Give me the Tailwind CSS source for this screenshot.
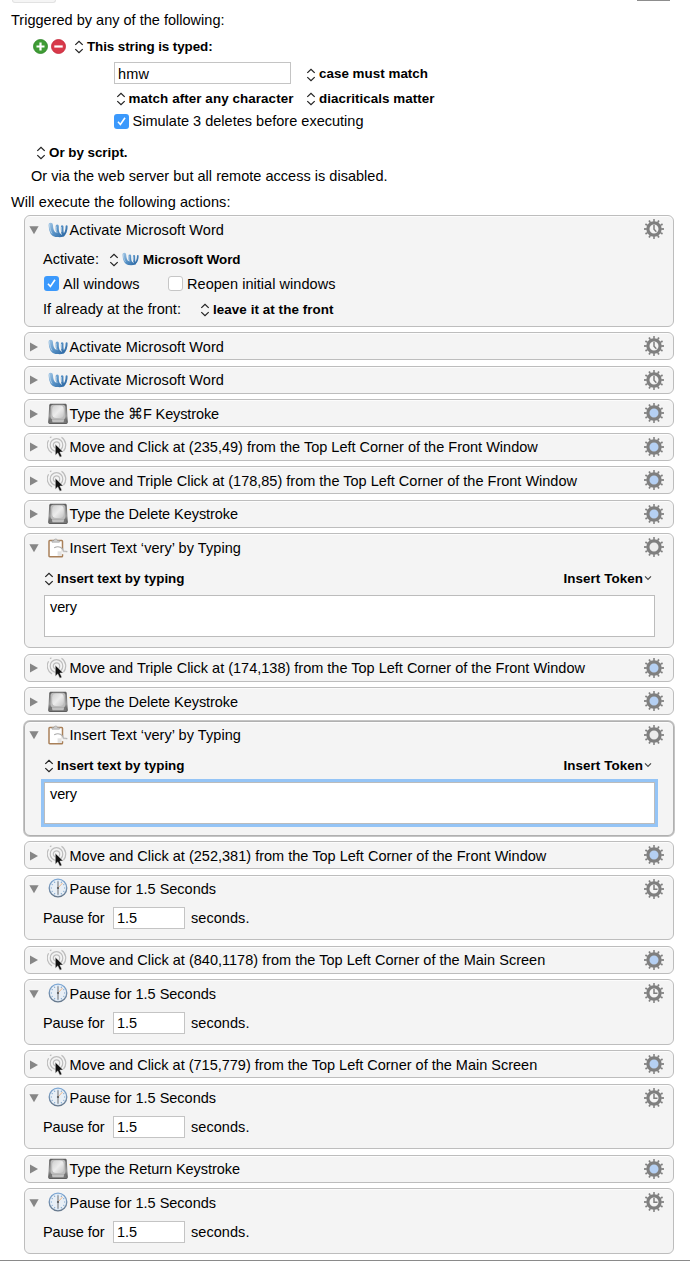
<!DOCTYPE html>
<html lang="en">
<head>
<meta charset="utf-8">
<title>Macro editor</title>
<script src="https://cdn.jsdelivr.net/npm/@tailwindcss/browser@4"></script>
</head>
<body class="bg-white">
<svg class="absolute size-0" width="0" height="0">
  <defs>
    <linearGradient id="gWord" gradientUnits="userSpaceOnUse" x1="1" y1="1" x2="15" y2="15"><stop offset="0" stop-color="#a3c6e4"/><stop offset=".5" stop-color="#5a94c8"/><stop offset="1" stop-color="#2f6ba6"/></linearGradient>
    <linearGradient id="gKey" x1="0" y1="0" x2="0" y2="1"><stop offset="0" stop-color="#5c5c5c"/><stop offset=".6" stop-color="#999"/><stop offset="1" stop-color="#3f3f3f"/></linearGradient>
    <linearGradient id="gCap" x1="0" y1="0" x2="1" y2="1"><stop offset="0" stop-color="#cfcfcf"/><stop offset=".5" stop-color="#ececec"/><stop offset="1" stop-color="#c4c4c4"/></linearGradient>
    <linearGradient id="gRim" x1="0" y1="0" x2="0" y2="1"><stop offset="0" stop-color="#7fa9d6"/><stop offset="1" stop-color="#66788c"/></linearGradient>
  </defs>
  <symbol id="updown" viewBox="0 0 10 14"><path d="M1.300 4.900 5 1.300l3.700 3.600M1.300 9.100 5 12.700l3.700-3.600" fill="none" stroke="#222" stroke-width="1.25"/></symbol>
  <symbol id="down" viewBox="0 0 8 6"><path d="M1 1.300 4 4.300l3-3" fill="none" stroke="#444" stroke-width="1.200"/></symbol>
  <symbol id="open" viewBox="0 0 10 10"><path d="M.4 1.300h9.200L5 9.200z" fill="#868686"/></symbol>
  <symbol id="closed" viewBox="0 0 10 10"><path d="M1 .5v9L9 5z" fill="#868686"/></symbol>
  <symbol id="word" viewBox="0 0 20 16">
    <g fill="none" stroke="url(#gWord)" stroke-linecap="round">
      <path d="M2.700 2.900C2.900 7.500 4.500 12.400 8 12.900" stroke-width="4.400"/>
      <path d="M9.200 4.200c-.2 4 .2 8 2.800 9" stroke-width="3.200"/>
      <path d="M14.200 4.600c-.2 3.500 0 6.500 1 8" stroke-width="2.600"/>
      <path d="M18.600 4.200c.1 3.500-1.300 8.500-3.600 9" stroke-width="2"/>
      <path d="M6 12.500c2 2.200 7 1.800 9.500 1" stroke-width="2"/>
    </g>
    <path d="M1.500 2.400c.2 3.800 1 6.600 2.600 9.100M8.300 4.500c-.1 3 .2 5 .9 6.600M13.500 5l.2 5" fill="none" stroke="#cbe1f3" stroke-width=".8" opacity=".8"/>
  </symbol>
  <symbol id="key" viewBox="0 0 20 22">
    <path d="M3 .8h14c1.300 0 1.700.7 1.800 1.600l1 16.700c0 1.300-.8 2-2 2H2.200c-1.300 0-2-.7-2-2l1-16.700C1.300 1.400 1.800.8 3 .8z" fill="url(#gKey)"/>
    <path d="M2 16.500h16l.8 2.700c.1.800-.3 1.200-1 1.200H2.200c-.7 0-1.100-.4-1-1.200z" fill="#777"/>
    <path d="M3.800 16.300h12.500l-.8 3h-11z" fill="#c2c2c2"/>
    <rect x="2.600" y="1.800" width="14.800" height="14.500" rx="2.500" fill="#bcbcbc"/>
    <rect x="4.200" y="2.600" width="11.600" height="12.300" rx="4" fill="url(#gCap)"/>
  </symbol>
  <symbol id="click" viewBox="0 0 20 22">
    <g fill="none" stroke="#bdbdbd" stroke-width="1.200"><circle cx="9.500" cy="9" r="3.200"/><circle cx="9.500" cy="9" r="6.300"/><path d="M1.600 4.200A9.300 9.300 0 0 0 5 17M14.500 1.200A9.300 9.300 0 0 1 16.500 15M3 1.800l1.400-1"/></g>
    <path d="M8.300 8.200v11l2.500-2.300 2 4.300 2.100-1-2-4.200h3.400z" fill="#111" stroke="#eee" stroke-width=".5"/>
  </symbol>
  <symbol id="clip" viewBox="0 0 20 20">
    <rect x="1" y="2.600" width="13.500" height="16.200" rx=".8" fill="#fff" stroke="#a98059" stroke-width="1.500"/>
    <path d="M4 4.200V2.500h2C6 .5 9.400.5 9.400 2.500h2v1.700z" fill="#cfcfcf" stroke="#999" stroke-width=".6"/>
    <path d="M9.600 17.800v-4.500h4v4.500z" fill="#e2e2e2"/>
    <path d="M13.500 11.200h2.500v5h-2.500z" fill="#f4f4f4"/>
    <path d="M6.200 9.800c5-2.600 8.300.2 9.300 3.200l3.800.6" fill="none" stroke="#a9a9a9" stroke-width="1.100"/>
    <path d="M15.200 10.500v3.200h3.600" fill="none" stroke="#c4c4c4" stroke-width=".9"/>
  </symbol>
  <symbol id="clock" viewBox="0 0 20 20">
    <circle cx="10" cy="10" r="8.800" fill="#e8eff6" stroke="url(#gRim)" stroke-width="1.300"/>
    <circle cx="10" cy="10" r="6.700" fill="none" stroke="#6f9cc8" stroke-width="1.100" pathLength="120" stroke-dasharray="3 7" stroke-dashoffset="1.500"/>
    <path d="m10 10 4.500-5" stroke="#efb98c" stroke-width="1"/>
    <path d="M10 3.500v13" stroke="#96999d" stroke-width="1.500"/><circle cx="10" cy="10" r="1.100" fill="#555"/>
  </symbol>
  <symbol id="gear" viewBox="0 0 20 20">
    <circle cx="10" cy="10" r="6.100" fill="none" stroke="#7f7f7f" stroke-width="3.200"/>
    <circle cx="10" cy="10" r="8.500" fill="none" stroke="#7f7f7f" stroke-width="2.800" pathLength="120" stroke-dasharray="3.600 6.400" stroke-dashoffset="1.800"/>
  </symbol>
</svg>

<main id="page" class="relative flex h-[1261px] w-[690px] flex-col overflow-hidden bg-white font-['Liberation_Sans',Arial,sans-serif] text-[14.5px] leading-[20px] text-black"></main>

<script>
const icon = (id, cls) => `<svg class="shrink-0 ${cls}"><use href="#${id}"/></svg>`;
// Letter-spacing that gives a text run its advance width.
const pen = document.createElement('canvas').getContext('2d');
const spacing = (s, w, font) => {
  pen.font = font + ' "Liberation Sans", Arial, sans-serif';
  return ((w - pen.measureText(s).width) / [...s].length).toFixed(3);
};
const t = (s, w) => `<span class="shrink-0 whitespace-nowrap" style="letter-spacing:${spacing(s, w, '14.5px')}px">${s}</span>`;
const b = (s, w) => `<span class="mt-[2px] shrink-0 whitespace-nowrap text-[13.4px] font-bold" style="letter-spacing:${spacing(s, w, 'bold 13.4px')}px">${s}</span>`;
const ud = icon('updown', 'w-[10px] h-[14px] mt-[2px]');
const checked = `<span class="flex size-[15px] shrink-0 items-center justify-center rounded-[3px] bg-[#3b99fc]"><svg class="size-[11px]" viewBox="0 0 11 11"><path d="M2 5.800 4.400 8.500 9 1.800" fill="none" stroke="#fff" stroke-width="1.600"/></svg></span>`;
const unchecked = `<span class="size-[15px] shrink-0 rounded-[3px] border border-[#c6c6c6] bg-white"></span>`;

const sizes = {
  word: 'w-[20px] h-[16px] ml-[8.5px] mr-[2px]',
  key: 'w-[20px] h-[22px] ml-[8.5px] mr-[2px]',
  click: 'w-[20px] h-[22px] ml-[8px] mr-[2.5px]',
  clip: 'w-[20px] h-[20px] ml-[8.5px] mr-[2px]',
  clock: 'w-[20px] h-[20px] ml-[8.5px] mr-[2px] mb-[2px]'
};
const cores = {
  timer: '<path d="M10 6v4.200l2.300 2.500" fill="none" stroke="#7f7f7f" stroke-width="1.500"/>',
  blue: '<circle cx="10" cy="10" r="5" fill="#b5d0f3"/>',
  plain: '<circle cx="10" cy="10" r="5" fill="#ececec"/>',
  pause: '<path d="M10 6v4.300h3.500" fill="none" stroke="#7f7f7f" stroke-width="1.500"/>'
};
function card(ic, title, w, core, body = '', h = 'h-[28px]', edge = 'border-[#bdbdbd]') {
  return `<section class="mb-[5.5px] ml-[24px] w-[650px] shrink-0 rounded-[6px] border bg-[#f4f4f4] shadow-[inset_0_1px_0_#fcfcfc] ${h} ${edge}">
    <header class="flex h-[27px] items-center pl-[4px] pr-[9px]">
      ${icon(body ? 'open' : 'closed', 'size-[10px]')}
      ${icon(ic, sizes[ic])}
      ${t(title, w - 0.5)}
      <svg class="ml-auto mb-px size-[20px] shrink-0" viewBox="0 0 20 20">${cores[core]}<use href="#gear"/></svg>
    </header>${body}</section>`;
}
const activateBody = `
  <div class="mt-[4px] flex h-[24px] items-center pl-[18px]">${t('Activate:', 56)}<span class="w-[10px]"></span>${ud}${icon('word', 'w-[17px] h-[14px] ml-[3px] mr-[4px]')}${b('Microsoft Word', 97.5)}</div>
  <div class="flex h-[25px] items-center pl-[19px]">${checked}<span class="w-[4px]"></span>${t('All windows', 76.5)}<span class="w-[28.5px]"></span>${unchecked}<span class="w-[4px]"></span>${t('Reopen initial windows', 148.5)}</div>
  <div class="flex h-[25px] items-center pl-[18px]">${t('If already at the front:', 138)}<span class="w-[19px]"></span>${ud}<span class="w-[3px]"></span>${b('leave it at the front', 120.5)}</div>`;
const insertBody = (focus) => `
  <div class="mt-[5.5px] flex h-[22px] items-center pl-[19px] pr-[21px]">${ud}<span class="w-[3px]"></span>${b('Insert text by typing', 127.5)}<span class="ml-auto"></span>${b('Insert Token', 79.5)}${icon('down', 'w-[8px] h-[6px] ml-px')}</div>
  <div class="ml-[19px] mt-[6px] h-[42px] w-[611px] border border-[#bcbcbc] bg-white pl-[5px] pt-px ${focus}">${t('very', 27)}</div>`;
const pauseBody = `
  <div class="mt-[4px] flex h-[23px] items-center pl-[18px]">${t('Pause for', 61.5)}<span class="ml-[8.5px] mr-[6px] flex h-[22px] w-[72px] shrink-0 items-center border border-[#c4c4c4] bg-white pl-[3px]">${t('1.5', 20)}</span>${t('seconds.', 58.5)}</div>`;

const activate = () => card('word', 'Activate Microsoft Word', 155, 'timer');
const key = (s, w) => card('key', s, w, 'blue');
const click = (s, w) => card('click', s, w, 'blue');
const insert = (focus, edge) => card('clip', 'Insert Text ‘very’ by Typing', 173, 'plain', insertBody(focus), 'h-[114.9px]', edge);
const pause = () => card('clock', 'Pause for 1.5 Seconds', 147, 'pause', pauseBody, 'h-[65.5px]');

document.getElementById('page').innerHTML = `
  <div class="flex h-[3px] shrink-0 justify-between pl-[12px] pr-[20px]"><span class="h-[3px] w-[44px] rounded-b-[4px] border-x border-b border-[#e2e2e2] bg-[#f5f5f5]"></span><span class="h-px w-[33px] bg-[#8d8d8d]"></span></div>
  <div class="mt-[7px] flex h-[20px] shrink-0 items-center pl-[11px]">${t('Triggered by any of the following:', 213.5)}</div>
  <div class="mt-[6px] flex h-[20px] shrink-0 items-center pl-[33px]">
    <svg class="size-[15px] shrink-0" viewBox="0 0 15 15"><circle cx="7.500" cy="7.500" r="7" fill="#3f9c35" stroke="#2c8426" stroke-width=".8"/><path d="M7.500 3.500v8M3.500 7.500h8" stroke="#fff" stroke-width="2.200"/></svg>
    <svg class="ml-[3px] size-[15px] shrink-0" viewBox="0 0 15 15"><circle cx="7.500" cy="7.500" r="7" fill="#d8394a" stroke="#c52437" stroke-width=".8"/><path d="M3.300 7.500h8.400" stroke="#fff" stroke-width="2.200"/></svg>
    <span class="w-[8px]"></span>${ud}<span class="w-[3px]"></span>${b('This string is typed:', 125.5)}
  </div>
  <div class="mt-[5px] flex h-[23px] shrink-0 items-center pl-[114px]">
    <span class="flex h-[22px] w-[177px] items-center border border-[#c4c4c4] bg-white pl-[3px] pt-[2px]">${t('hmw', 31)}</span><span class="w-[15px]"></span>${icon('updown', 'w-[10px] h-[14px] mt-[4px]')}<span class="w-[3px]"></span><span class="mt-px flex">${b('case must match', 109)}</span>
  </div>
  <div class="mt-[4px] flex h-[20px] shrink-0 items-center pl-[116px]">${ud}<span class="w-[2.5px]"></span>${b('match after any character', 165)}<span class="w-[12.5px]"></span>${ud}<span class="w-[3px]"></span>${b('diacriticals matter', 115.5)}</div>
  <div class="mt-[3px] flex h-[20px] shrink-0 items-center pl-[114px]">${checked}<span class="w-[3.5px]"></span>${t('Simulate 3 deletes before executing', 231)}</div>
  <div class="mt-[11px] flex h-[20px] shrink-0 items-center pl-[36px]">${ud}<span class="w-[3px]"></span>${b('Or by script.', 78.5)}</div>
  <div class="mt-[4px] flex h-[20px] shrink-0 items-center pl-[31px]">${t('Or via the web server but all remote access is disabled.', 356.5)}</div>
  <div class="mb-[3.2px] mt-[6px] flex h-[20px] shrink-0 items-center pl-[11px]">${t('Will execute the following actions:', 219.5)}</div>
  ${card('word', 'Activate Microsoft Word', 155, 'timer', activateBody, 'h-[111.6px]')}
  ${activate()}${activate()}
  ${key('Type the ⌘F Keystroke', 150)}
  ${click('Move and Click at (235,49) from the Top Left Corner of the Front Window', 469)}
  ${click('Move and Triple Click at (178,85) from the Top Left Corner of the Front Window', 508.5)}
  ${key('Type the Delete Keystroke', 169)}
  ${insert('', 'border-[#bdbdbd]')}
  ${click('Move and Triple Click at (174,138) from the Top Left Corner of the Front Window', 516.5)}
  ${key('Type the Delete Keystroke', 169)}
  ${insert('ring-[3px] ring-[#94c4f6]', 'border-[#b0b0b0] ring-1 ring-[#c4c4c4]')}
  ${click('Move and Click at (252,381) from the Top Left Corner of the Front Window', 477.5)}
  ${pause()}
  ${click('Move and Click at (840,1178) from the Top Left Corner of the Main Screen', 476.5)}
  ${pause()}
  ${click('Move and Click at (715,779) from the Top Left Corner of the Main Screen', 468.5)}
  ${pause()}
  ${key('Type the Return Keystroke', 171)}
  ${pause()}
  <div class="mt-auto h-px w-full shrink-0 bg-[#8a8a8a]"></div>`;
</script>
</body>
</html>
